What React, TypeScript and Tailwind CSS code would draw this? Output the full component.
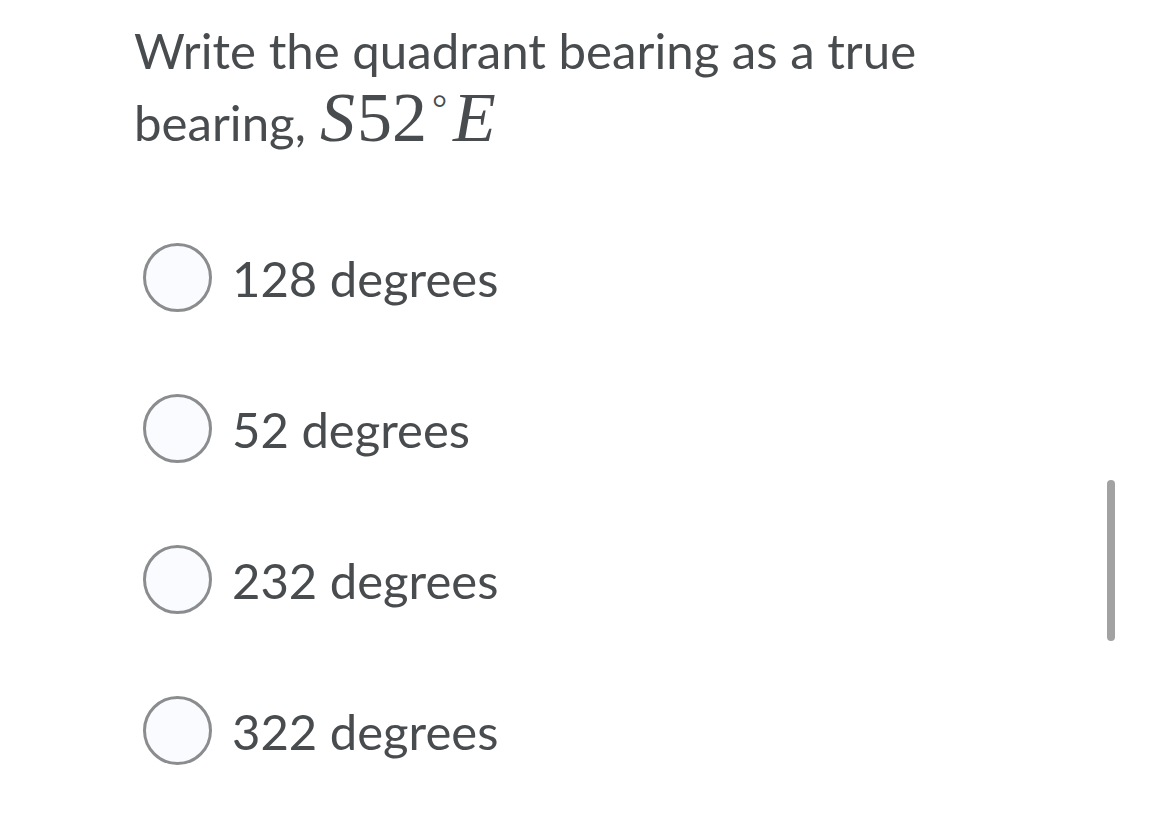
import React from "react";

const options = ["128 degrees", "52 degrees", "232 degrees", "322 degrees"];

export default function App() {
  return (
    <div className="relative w-[1170px] h-[840px] bg-white overflow-hidden text-[#494c4e]" style={{ fontFamily: "Lato, 'Noto Sans', sans-serif" }}>
      <div className="pl-[134px] pt-[16px]">
        <div className="text-[49.2px] leading-[68px]">
          <div>Write the quadrant bearing as a true</div>
          <div className="flex items-baseline h-[72px]">
            <span>bearing,</span>
            <span className="ml-[14px] text-[70px] leading-[68px]" style={{ fontFamily: "'Liberation Serif', 'DejaVu Serif', serif" }}>
              <span className="italic">S</span>
              <span className="ml-[2px]">52</span>
              <span className="relative top-[-20px] text-[38px] ml-[5px]">°</span>
              <span className="italic ml-[6px]">E</span>
            </span>
          </div>
        </div>
        <div className="mt-[87px] ml-[9px] flex flex-col gap-[82px]">
          {options.map((o) => (
            <div key={o} className="flex items-center gap-[20px]">
              <div className="w-[69px] h-[69px] rounded-full border-[3px] border-[#8a8c8e] bg-[#f9fbff]" />
              <span className="text-[49px] leading-[56px]">{o}</span>
            </div>
          ))}
        </div>
      </div>
      <div className="absolute left-[1107px] top-[480px] w-[8px] h-[161px] rounded-full bg-[#a2a2a2]" />
    </div>
  );
}
